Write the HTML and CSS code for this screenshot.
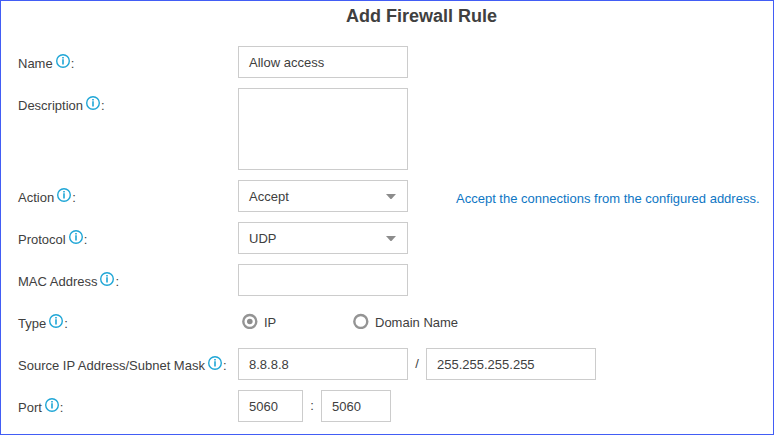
FILE: index.html
```html
<!DOCTYPE html>
<html lang="en">
<head>
<meta charset="utf-8">
<title>Add Firewall Rule</title>
<link rel="stylesheet" href="styles.css">
</head>
<body>
<svg class="defs" width="0" height="0">
  <symbol id="info" viewBox="0 0 14 14">
    <circle cx="7" cy="7" r="6.3" fill="none" stroke="#1fa6d6" stroke-width="1.4"/>
    <path d="M6.2 3h1.6v1.4H6.2zM6.2 5.2h1.6v5.2H6.2z" fill="#1fa6d6"/>
  </symbol>
</svg>
<main class="dialog">
  <h1 class="title">Add Firewall Rule</h1>
  <form class="form">
    <div class="row">
      <div class="label"><span class="name">Name</span><svg class="info"><use href="#info"/></svg><span class="colon">:</span></div>
      <div class="field">Allow access</div>
    </div>
    <div class="row row-tall">
      <div class="label"><span class="name">Description</span><svg class="info"><use href="#info"/></svg><span class="colon">:</span></div>
      <div class="field area"></div>
    </div>
    <div class="row">
      <div class="label"><span class="name">Action</span><svg class="info"><use href="#info"/></svg><span class="colon">:</span></div>
      <div class="field select">Accept<svg class="caret" viewBox="0 0 10 5"><path d="M0 0h10L5 5.5z"/></svg></div>
      <div class="hint">Accept the connections from the configured address.</div>
    </div>
    <div class="row">
      <div class="label"><span class="name">Protocol</span><svg class="info"><use href="#info"/></svg><span class="colon">:</span></div>
      <div class="field select">UDP<svg class="caret" viewBox="0 0 10 5"><path d="M0 0h10L5 5.5z"/></svg></div>
    </div>
    <div class="row">
      <div class="label"><span class="name">MAC Address</span><svg class="info"><use href="#info"/></svg><span class="colon">:</span></div>
      <div class="field"></div>
    </div>
    <div class="row">
      <div class="label"><span class="name">Type</span><svg class="info"><use href="#info"/></svg><span class="colon">:</span></div>
      <div class="radios">
        <div class="radio radio-ip"><svg class="dot" viewBox="0 0 16 16"><circle class="ring" cx="7.8" cy="8.5" r="6.5"/><circle class="fill" cx="7.8" cy="8.5" r="2.8"/></svg>IP</div>
        <div class="radio"><svg class="dot" viewBox="0 0 16 16"><circle class="ring" cx="7.8" cy="8.5" r="6.5"/></svg>Domain Name</div>
      </div>
    </div>
    <div class="row">
      <div class="label"><span class="name">Source IP Address/Subnet Mask</span><svg class="info"><use href="#info"/></svg><span class="colon">:</span></div>
      <div class="field">8.8.8.8</div>
      <div class="sep">/</div>
      <div class="field">255.255.255.255</div>
    </div>
    <div class="row">
      <div class="label"><span class="name">Port</span><svg class="info"><use href="#info"/></svg><span class="colon">:</span></div>
      <div class="field port-from">5060</div>
      <div class="sep">:</div>
      <div class="field port-to">5060</div>
    </div>
  </form>
</main>
</body>
</html>
```
FILE: styles.css
```css
* { box-sizing: border-box; }

body {
  margin: 0;
  background: #fff;
  color: #404040;
  font: 13px/16px "Liberation Sans", Arial, sans-serif;
}

.defs { display: block; }

.dialog {
  width: 774px;
  height: 435px;
  border: 1px solid #425df5;
  padding: 5px 0 0 17px;
}

.title {
  margin: 0 0 20px;
  padding-left: 328px;
  font-size: 18px;
  line-height: 20px;
  font-weight: bold;
  white-space: nowrap;
}

.form {
  display: flex;
  flex-direction: column;
  gap: 10px;
}

.row { display: flex; height: 32px; }
.row-tall { height: 82px; }

.label {
  display: flex;
  width: 220px;
  padding-top: 10px;
  white-space: nowrap;
}

.info {
  width: 14px;
  height: 14px;
  margin: -2px 1px 0 3px;
}

.field {
  width: 170px;
  height: 32px;
  padding: 8px 10px;
  border: 1px solid #ccc;
}

.area { height: 82px; }

.select {
  display: flex;
  justify-content: space-between;
}

.caret {
  width: 10px;
  height: 5px;
  margin-top: 5px;
  margin-right: 1px;
  fill: #8c8c8c;
}

.hint {
  margin-left: 48px;
  padding-top: 11px;
  color: #0e76c4;
  white-space: nowrap;
}

.radios { display: flex; padding-left: 4px; }

.radio {
  display: flex;
  padding-top: 9px;
  white-space: nowrap;
}

.radio-ip { width: 111px; }

.dot {
  width: 16px;
  height: 16px;
  margin: -2px 6px 0 0;
}

.ring { fill: none; stroke: #949494; stroke-width: 2.4; }
.fill { fill: #8c8c8c; }

.sep {
  width: 18px;
  padding-top: 8px;
  text-align: center;
}

.port-from { width: 65px; }
.port-to { width: 70px; }
```
